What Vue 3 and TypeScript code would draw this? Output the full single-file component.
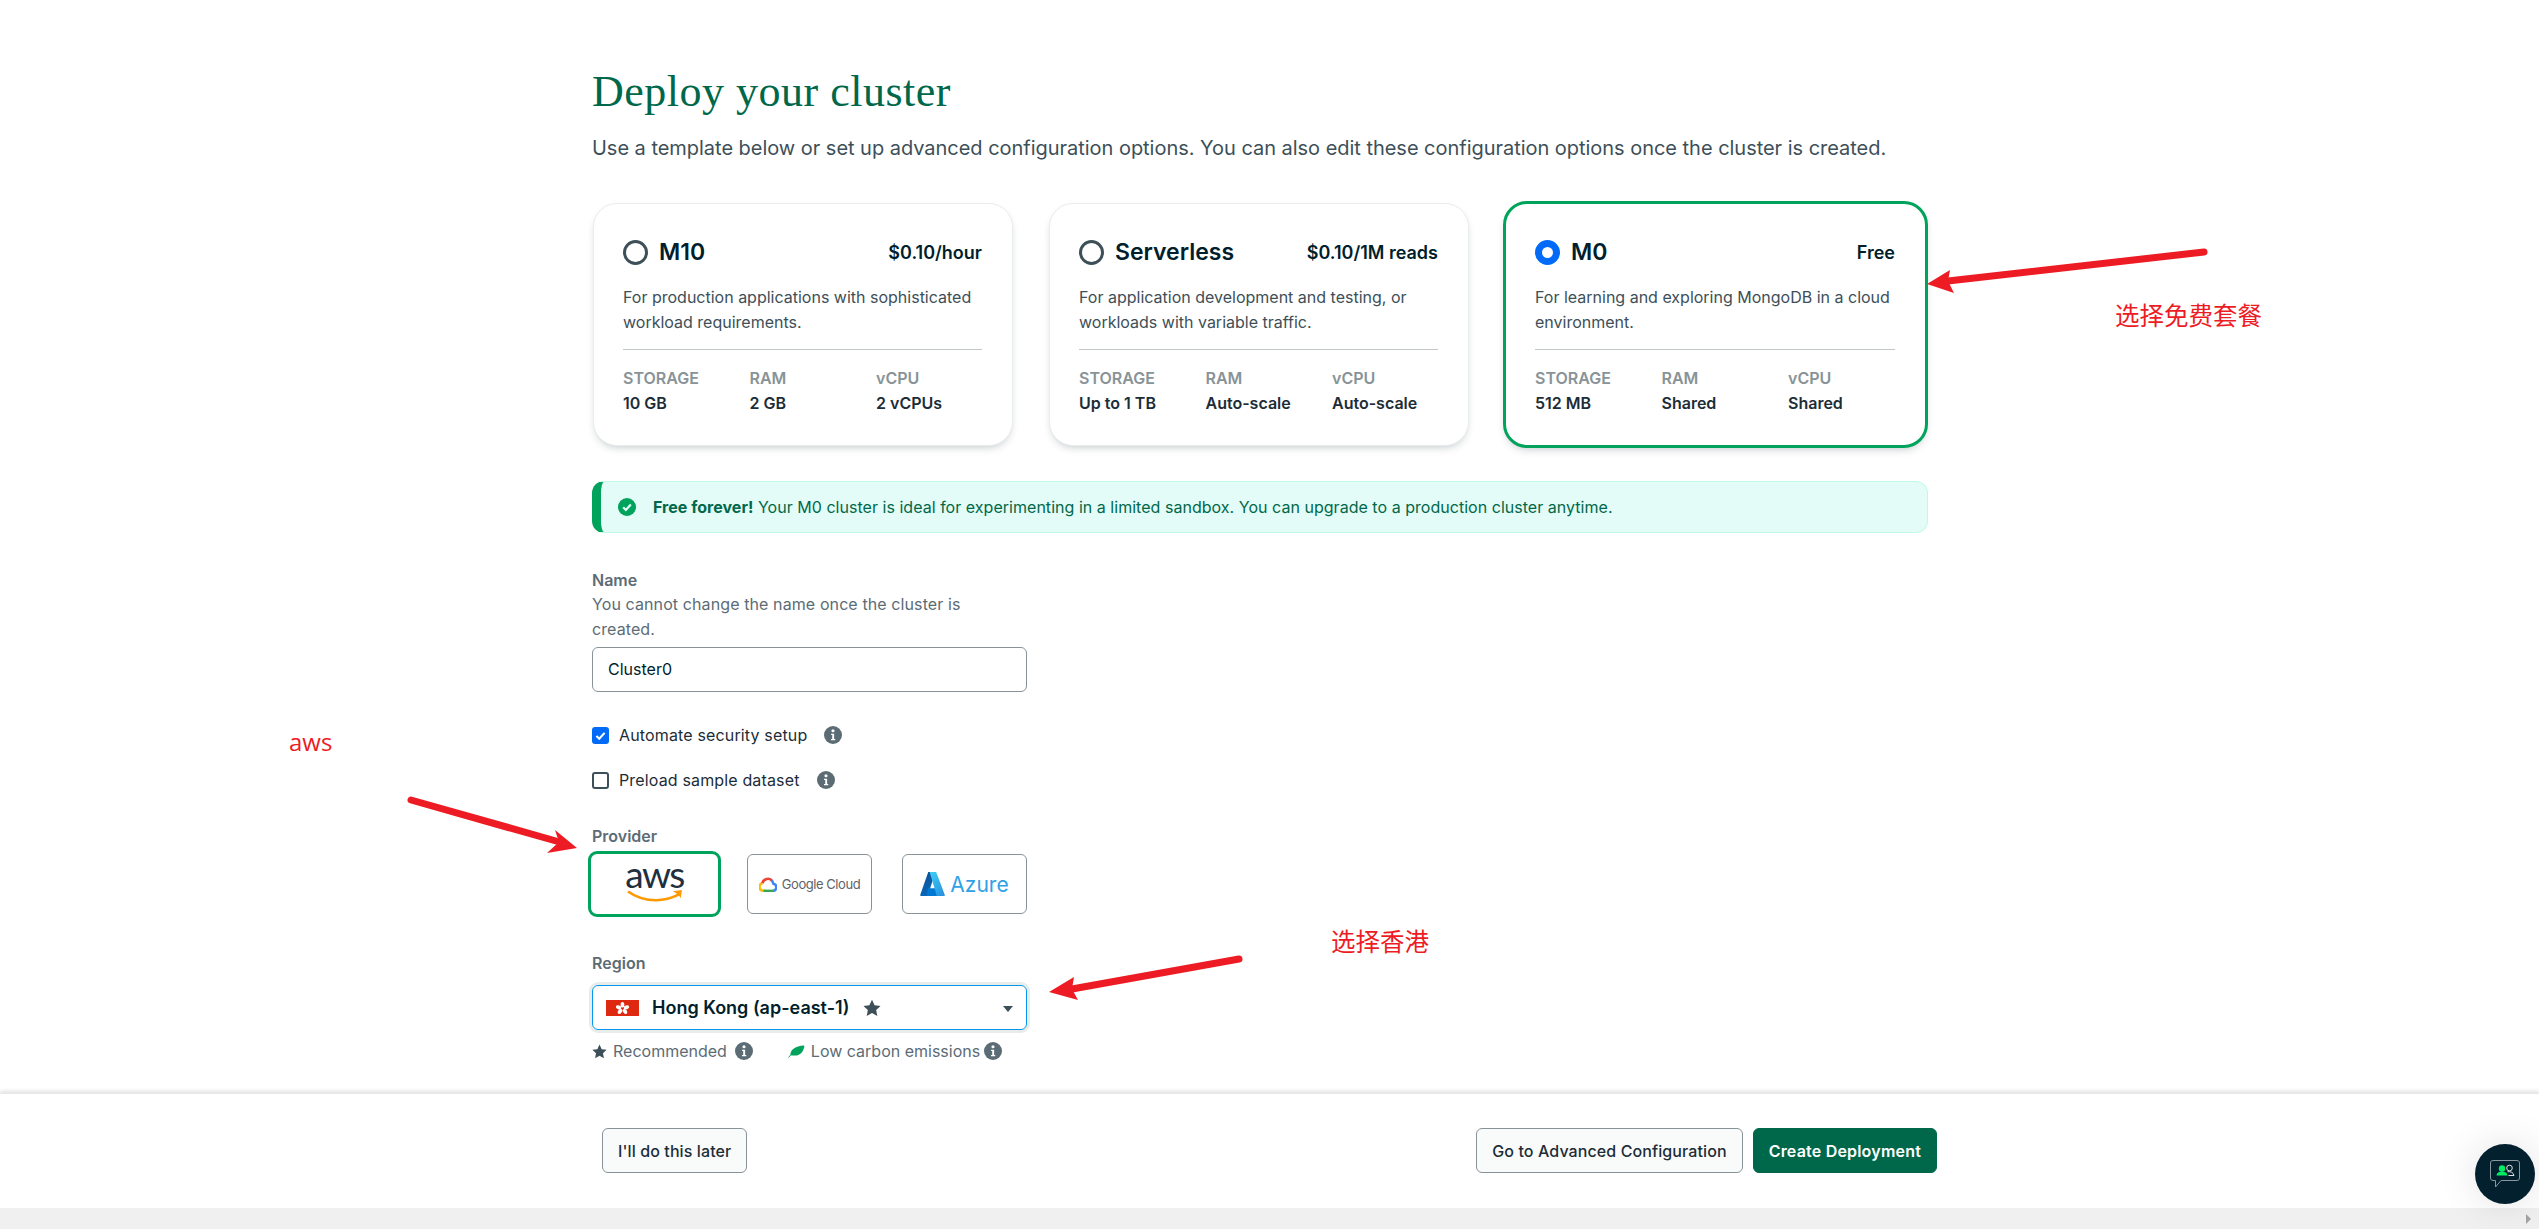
<script setup lang="ts">
interface Stat { label: string; value: string }
interface Plan { name: string; price: string; desc: string[]; stats: Stat[]; selected?: boolean }
const plans: Plan[] = [
  { name: 'M10', price: '$0.10/hour', desc: ['For production applications with sophisticated', 'workload requirements.'],
    stats: [{ label: 'STORAGE', value: '10 GB' }, { label: 'RAM', value: '2 GB' }, { label: 'vCPU', value: '2 vCPUs' }] },
  { name: 'Serverless', price: '$0.10/1M reads', desc: ['For application development and testing, or', 'workloads with variable traffic.'],
    stats: [{ label: 'STORAGE', value: 'Up to 1 TB' }, { label: 'RAM', value: 'Auto-scale' }, { label: 'vCPU', value: 'Auto-scale' }] },
  { name: 'M0', price: 'Free', desc: ['For learning and exploring MongoDB in a cloud', 'environment.'], selected: true,
    stats: [{ label: 'STORAGE', value: '512 MB' }, { label: 'RAM', value: 'Shared' }, { label: 'vCPU', value: 'Shared' }] },
]
</script>

<template>
  <div class="page">
    <main class="main">
      <h1 class="title">Deploy your cluster</h1>
      <p class="subtitle">Use a template below or set up advanced configuration options. You can also edit these configuration options once the cluster is created.</p>

      <section class="plans">
        <article v-for="p in plans" :key="p.name" class="plan" :class="{ selected: p.selected }">
          <header class="plan-head">
            <span class="radio" :class="{ on: p.selected }"></span>
            <span class="plan-name">{{ p.name }}</span>
            <span class="plan-price">{{ p.price }}</span>
          </header>
          <p class="plan-desc"><span v-for="d in p.desc" :key="d" class="line">{{ d }}</span></p>
          <div class="stats">
            <div v-for="s in p.stats" :key="s.label" class="stat">
              <span class="stat-label">{{ s.label }}</span>
              <span class="stat-value">{{ s.value }}</span>
            </div>
          </div>
        </article>
      </section>

      <div class="banner">
        <svg class="banner-icon" viewBox="0 0 16 16" width="18" height="18">
          <circle cx="8" cy="8" r="8" fill="#00A35C" />
          <path d="M4.6 8.2 7 10.6 11.4 5.8" fill="none" stroke="#E3FCF7" stroke-width="2" />
        </svg>
        <span class="banner-text"><b>Free forever!</b> Your M0 cluster is ideal for experimenting in a limited sandbox. You can upgrade to a production cluster anytime.</span>
      </div>

      <section class="form">
        <label class="label">Name</label>
        <p class="hint">You cannot change the name once the cluster is<br />created.</p>
        <div class="input">Cluster0</div>

        <div class="check first">
          <span class="box on">
            <svg viewBox="0 0 16 16" width="13" height="13"><path d="M3 8.5 6.5 12 13 4.8" fill="none" stroke="#fff" stroke-width="2.6" /></svg>
          </span>
          <span class="check-text">Automate security setup</span>
          <svg class="info" viewBox="0 0 16 16" width="18" height="18"><circle cx="8" cy="8" r="8" fill="#5C6C75" /><circle cx="8" cy="4.2" r="1.4" fill="#fff" /><path d="M6.3 6.9h2.7v4.6h1v1.2H6.2v-1.2h1.1V8.1h-1z" fill="#fff" /></svg>
        </div>
        <div class="check second">
          <span class="box"></span>
          <span class="check-text">Preload sample dataset</span>
          <svg class="info" viewBox="0 0 16 16" width="18" height="18"><circle cx="8" cy="8" r="8" fill="#5C6C75" /><circle cx="8" cy="4.2" r="1.4" fill="#fff" /><path d="M6.3 6.9h2.7v4.6h1v1.2H6.2v-1.2h1.1V8.1h-1z" fill="#fff" /></svg>
        </div>

        <label class="label provider-label">Provider</label>
        <div class="providers">
          <div class="provider aws">
            <span class="aws-word">aws</span>
            <svg class="aws-smile" viewBox="0 0 56 14" width="56" height="14">
              <path d="M1 2.5C10 9 20 11.2 29 11.2 37 11.2 45 9 52 5.4" fill="none" stroke="#FF9900" stroke-width="2.6" />
              <path d="M46 2.2 55 1 53.6 9.4C52.8 7 51 5 46 2.2z" fill="#FF9900" />
            </svg>
          </div>
          <div class="provider">
            <svg viewBox="0 0 24 20" width="18" height="15" class="gc-icon">
              <path d="M8 18.5H6a5.2 5.2 0 0 1-1.5-10.2" fill="none" stroke="#FBBC05" stroke-width="3.4" />
              <path d="M4.5 8.4A7.5 7.5 0 0 1 18 5.6" fill="none" stroke="#EA4335" stroke-width="3.4" />
              <path d="M16.5 4.6A7 7 0 0 1 19.2 9a4.8 4.8 0 0 1-1.2 9.5" fill="none" stroke="#4285F4" stroke-width="3.4" />
              <path d="M6 18.5h12.5" fill="none" stroke="#34A853" stroke-width="3.4" />
            </svg>
            <span class="gc-word">Google Cloud</span>
          </div>
          <div class="provider">
            <svg viewBox="0 0 26 26" width="25" height="25">
              <defs>
                <linearGradient id="azA" x1="0" y1="0" x2="0.4" y2="1"><stop offset="0" stop-color="#114A8B" /><stop offset="1" stop-color="#0669BC" /></linearGradient>
                <linearGradient id="azB" x1="0.2" y1="0" x2="0.8" y2="1"><stop offset="0" stop-color="#3CCBF4" /><stop offset="1" stop-color="#2892DF" /></linearGradient>
              </defs>
              <path d="M8.6 0H16L8 25H1.2a1 1 0 0 1-.9-1.3z" fill="url(#azA)" />
              <path d="M19.8 17H8.2l-1 8H25.5z" fill="#0078D4" />
              <path d="M10 0h6.8L25.8 24a1 1 0 0 1-.9 1h-7.4z" fill="url(#azB)" />
            </svg>
            <span class="az-word">Azure</span>
          </div>
        </div>

        <label class="label region-label">Region</label>
        <div class="select">
          <svg class="flag" viewBox="0 0 33 16" width="33" height="16">
            <rect width="33" height="16" fill="#DE2910" />
            <g fill="#fff"><ellipse cx="16.5" cy="4.8" rx="1.9" ry="2.8" /><ellipse cx="12.6" cy="7.4" rx="1.9" ry="2.8" transform="rotate(-72 12.6 7.4)" /><ellipse cx="20.4" cy="7.4" rx="1.9" ry="2.8" transform="rotate(72 20.4 7.4)" /><ellipse cx="14" cy="11.4" rx="1.9" ry="2.8" transform="rotate(-144 14 11.4)" /><ellipse cx="19" cy="11.4" rx="1.9" ry="2.8" transform="rotate(144 19 11.4)" /></g>
          </svg>
          <span class="select-text">Hong Kong (ap-east-1)</span>
          <svg class="star" viewBox="0 0 16 16" width="18" height="18"><path d="M8 .6l2.3 4.9 5.3.7-3.9 3.6 1 5.3L8 12.5l-4.7 2.6 1-5.3L.4 6.2l5.3-.7z" fill="#3D4F58" /></svg>
          <span class="caret"></span>
        </div>
        <div class="legend">
          <svg viewBox="0 0 16 16" width="15" height="15"><path d="M8 .6l2.3 4.9 5.3.7-3.9 3.6 1 5.3L8 12.5l-4.7 2.6 1-5.3L.4 6.2l5.3-.7z" fill="#3D4F58" /></svg>
          <span class="legend-text rec">Recommended</span>
          <svg class="info" viewBox="0 0 16 16" width="18" height="18"><circle cx="8" cy="8" r="8" fill="#5C6C75" /><circle cx="8" cy="4.2" r="1.4" fill="#fff" /><path d="M6.3 6.9h2.7v4.6h1v1.2H6.2v-1.2h1.1V8.1h-1z" fill="#fff" /></svg>
          <svg class="leaf" viewBox="0 0 18 14" width="17" height="13"><path d="M2.5 11C2 5.5 7 1 17.5.5 17 7 13 12.5 5 11.2z" fill="#00A35C" /><path d="M.5 13.5C3 9.5 7 6.5 12 4.5" fill="none" stroke="#00A35C" stroke-width="1" /></svg>
          <span class="legend-text carbon">Low carbon emissions</span>
          <svg class="info" viewBox="0 0 16 16" width="18" height="18"><circle cx="8" cy="8" r="8" fill="#5C6C75" /><circle cx="8" cy="4.2" r="1.4" fill="#fff" /><path d="M6.3 6.9h2.7v4.6h1v1.2H6.2v-1.2h1.1V8.1h-1z" fill="#fff" /></svg>
        </div>
      </section>
    </main>

    <footer class="footer">
      <button class="btn">I'll do this later</button>
      <div class="footer-right">
        <button class="btn">Go to Advanced Configuration</button>
        <button class="btn primary">Create Deployment</button>
      </div>
    </footer>
    <div class="scrollbar"><span class="scroll-arrow"></span></div>

    <button class="chat" aria-label="Chat">
      <svg viewBox="0 0 32 30" width="32" height="30">
        <path d="M4 1.5h24a2.5 2.5 0 0 1 2.5 2.5v15a2.5 2.5 0 0 1-2.5 2.5H12L6.5 28V21.5H4A2.5 2.5 0 0 1 1.5 19V4A2.5 2.5 0 0 1 4 1.5z" fill="none" stroke="#8A979E" stroke-width="1" />
        <circle cx="13" cy="9.5" r="3.2" fill="#00ED64" /><path d="M7.5 16.5c.3-3 2.5-4 5.5-4s5 1 5.5 4z" fill="#00ED64" />
        <circle cx="20.5" cy="9" r="2.8" fill="none" stroke="#DDE3E6" stroke-width="1" /><path d="M18.5 12.8c3-.7 5.8.6 6.5 3.7h-5.5" fill="none" stroke="#DDE3E6" stroke-width="1" />
      </svg>
    </button>

    <svg class="arrows" viewBox="0 0 2539 1229" width="2539" height="1229">
      <g stroke="#ED1C24" stroke-width="7" stroke-linecap="round" fill="none">
        <path d="M2204 252 1948 281" />
        <path d="M411 800 556 841" />
        <path d="M1239 959 1072 989" />
      </g>
      <g fill="#ED1C24">
        <path d="M1927 284 1950 270 1948 281 1954 293z" />
        <path d="M577 848 555 830 559 842 547 853z" />
        <path d="M1049 992 1074 977 1072 989 1078 1000z" />
      </g>
    </svg>
    <span class="note note-plan">选择免费套餐</span>
    <span class="note note-aws">aws</span>
    <span class="note note-hk">选择香港</span>
  </div>
</template>

<style scoped>
.page { position: relative; width: 2539px; height: 1229px; overflow: hidden; display: flex; flex-direction: column; background: #fff; font-family: Inter, "Noto Sans", sans-serif; color: #001E2B; }
.main { flex: 1; min-height: 0; overflow: hidden; padding: 0 0 0 592px; }
.title { margin: 69px 0 0; font: 400 44px/46px "Liberation Serif", serif; color: #00684A; letter-spacing: .5px; }
.subtitle { margin: 20px 0 0; font-size: 20px; line-height: 26px; color: #3D4F58; white-space: nowrap; letter-spacing: -.03px; }
.plans { display: grid; grid-template-columns: repeat(3, 420px); gap: 36px; margin: 42px 0 0 1px; }
.plan { height: 243px; box-sizing: border-box; border-radius: 24px; border: 1px solid #E8EDEB; padding: 30px 30px 0 29px; box-shadow: 0 4px 10px -4px rgba(0, 30, 43, .3); background: #fff; }
.plan.selected { margin: -2px -3px -2px -2px; height: 247px; border: 3px solid #00A35C; padding: 30px 30px 0 29px; }
.plan-head { display: flex; align-items: center; height: 36px; }
.radio { width: 25px; height: 25px; box-sizing: border-box; border: 3px solid #3D4F58; border-radius: 50%; flex: none; }
.radio.on { border: 7px solid #016BF8; }
.plan-name { margin-left: 11px; font-size: 23px; font-weight: 600; }
.plan-price { margin-left: auto; font-size: 18px; font-weight: 600; }
.plan-desc { margin: 15px 0 0; font-size: 16px; line-height: 25px; color: #3D4F58; padding-bottom: 14px; border-bottom: 1px solid #C1C7C6; }
.line { display: block; white-space: nowrap; }
.stats { display: grid; grid-template-columns: repeat(3, 126.5px); margin-top: 16px; }
.stat { display: flex; flex-direction: column; }
.stat-label { font-size: 16px; line-height: 25px; font-weight: 600; color: #889397; }
.stat-value { font-size: 16px; line-height: 25px; font-weight: 600; color: #1C2D38; white-space: nowrap; }
.banner { width: 1336px; height: 52px; box-sizing: border-box; margin-top: 35px; display: flex; align-items: center; gap: 17px; padding-left: 17px; background: #E3FCF7; border: 1px solid #C0FAE6; border-left: 9px solid #00A35C; border-radius: 12px; }
.banner-icon { flex: none; }
.banner-text { font-size: 16px; color: #00684A; letter-spacing: .03px; }
.banner-text b { font-weight: 700; }
.form { width: 435px; }
.label { display: block; font-size: 16px; font-weight: 600; line-height: 24px; color: #5C6C75; }
.form > .label:first-child { margin-top: 35px; }
.hint { margin: 0; font-size: 16px; line-height: 25px; color: #5C6C75; white-space: nowrap; letter-spacing: .1px; }
.input { height: 45px; box-sizing: border-box; margin-top: 5px; border: 1px solid #889397; border-radius: 6px; padding-left: 15px; font-size: 16px; line-height: 43px; }
.check { display: flex; align-items: center; height: 18px; }
.check.first { margin-top: 34px; }
.check.second { margin-top: 27px; }
.box { width: 17px; height: 17px; box-sizing: border-box; border: 2px solid #3D4F58; border-radius: 3px; display: flex; align-items: center; justify-content: center; flex: none; }
.box.on { background: #016BF8; border: none; }
.check-text { margin-left: 10px; font-size: 16px; color: #1C2D38; letter-spacing: .15px; }
.check .info { margin-left: 17px; }
.provider-label { margin-top: 35px; }
.providers { display: flex; gap: 30px; align-items: center; margin-top: 3px; height: 66px; }
.provider { width: 125px; height: 60px; box-sizing: border-box; border: 1px solid #889397; border-radius: 6px; display: flex; align-items: center; justify-content: center; gap: 5px; flex: none; }
.provider.aws { position: relative; flex-direction: column; gap: 0; width: 133px; height: 66px; margin: 0 -4px; border: 3px solid #00A35C; border-radius: 9px; }
.aws-word { font: 400 37px/28px Lato, sans-serif; color: #232F3E; margin-top: -6px; letter-spacing: -1.5px; }
.aws-smile { margin-top: 1px; }
.gc-word { font-size: 13px; color: #5F6368; white-space: nowrap; letter-spacing: -.45px; }
.az-word { font-size: 21px; color: #2FA1E6; }
.region-label { margin-top: 34px; }
.select { height: 45px; box-sizing: border-box; margin-top: 10px; border: 1px solid #0498EC; border-radius: 6px; box-shadow: 0 0 0 3px #E8EDEB; display: flex; align-items: center; padding-left: 13px; position: relative; }
.flag { flex: none; }
.select-text { margin-left: 13px; font-size: 18px; font-weight: 600; }
.star { margin-left: 14px; }
.caret { position: absolute; right: 13px; top: 20px; border: 5px solid transparent; border-top: 6px solid #3D4F58; border-bottom: 0; }
.legend { display: flex; align-items: center; margin-top: 12px; height: 18px; color: #5C6C75; }
.legend-text { font-size: 16px; white-space: nowrap; }
.rec { margin-left: 6px; margin-right: 8px; }
.leaf { margin-left: 35px; }
.carbon { margin-left: 6px; margin-right: 4px; }
.footer { flex: none; height: 115px; box-sizing: border-box; padding: 34px 602px 0; display: flex; justify-content: space-between; align-items: flex-start; background: #fff; border-top: 1px solid #E8E8E8; box-shadow: 0 -2px 4px rgba(0, 0, 0, .12); position: relative; }
.footer-right { display: flex; gap: 10px; }
.btn { height: 45px; box-sizing: border-box; padding: 0 15px; border: 1px solid #889397; border-radius: 6px; background: #F9FBFA; font: 500 16px Inter, sans-serif; letter-spacing: .1px; color: #1C2D38; white-space: nowrap; }
.btn.primary { background: #00684A; border-color: #00684A; color: #fff; font-weight: 600; letter-spacing: .2px; }
.scrollbar { flex: none; height: 21px; background: #F0F0F0; position: relative; }
.scroll-arrow { position: absolute; right: 8px; top: 6px; border: 5px solid transparent; border-left: 5px solid #A3A3A3; border-right: 0; }
.chat { position: absolute; left: 2475px; top: 1144px; width: 60px; height: 60px; padding: 0; border: none; border-radius: 50%; background: #03202F; display: flex; align-items: center; justify-content: center; box-shadow: 0 0 40px rgba(0, 0, 0, .12); }
.arrows { position: absolute; left: 0; top: 0; pointer-events: none; }
.note { position: absolute; color: #ED1C24; font-family: "Noto Sans CJK SC", sans-serif; font-size: 24.5px; line-height: 30px; white-space: nowrap; }
.note-plan { left: 2115px; top: 300px; }
.note-aws { left: 289px; top: 727px; font-family: "Open Sans", sans-serif; font-size: 24px; }
.note-hk { left: 1331px; top: 926px; }
</style>
